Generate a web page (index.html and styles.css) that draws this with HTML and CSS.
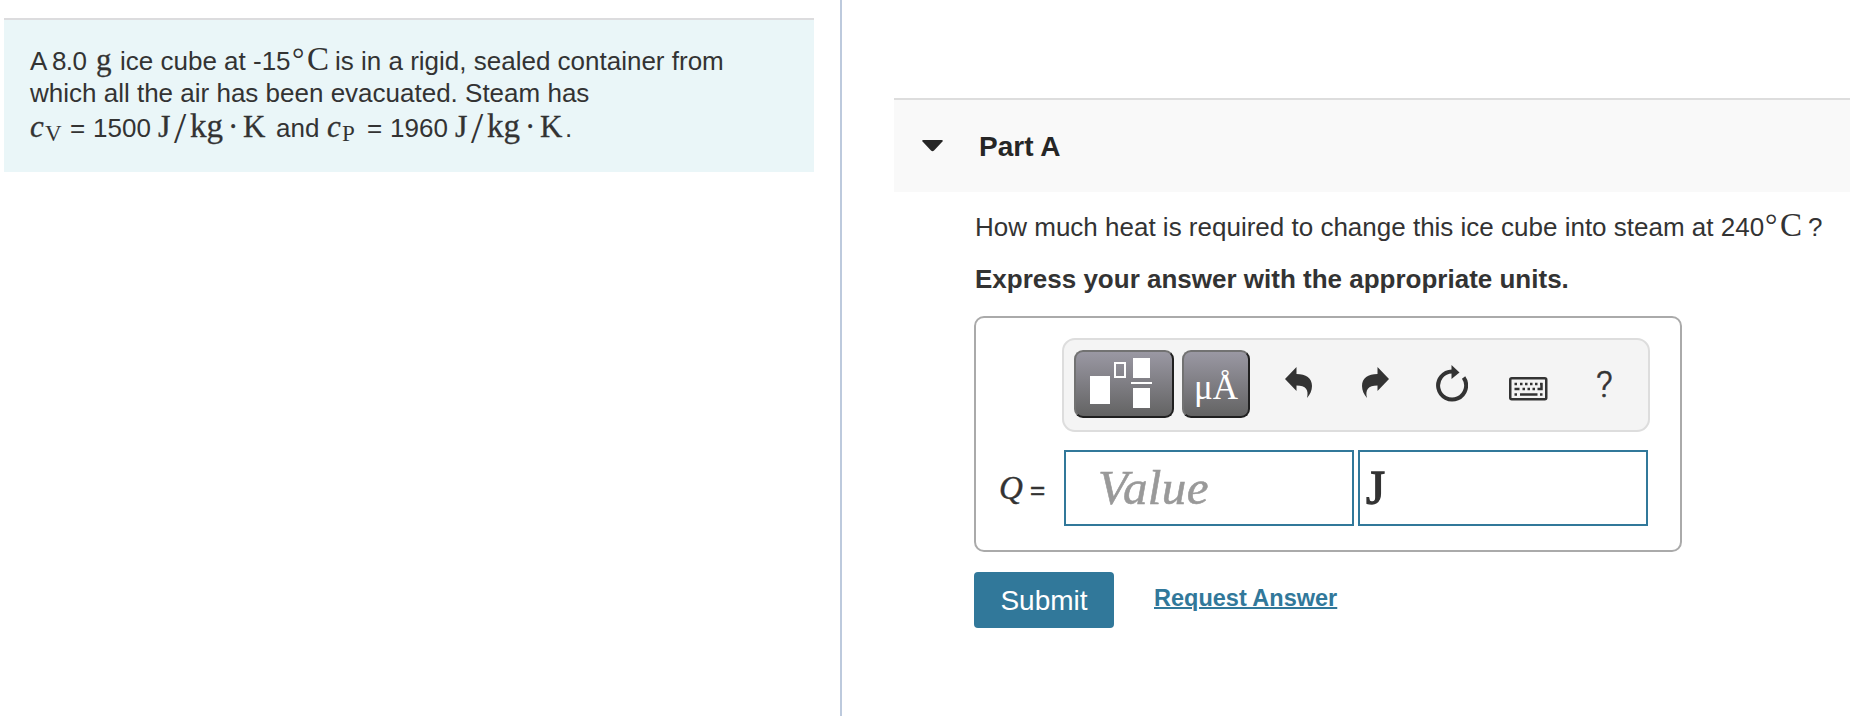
FILE: index.html
```
<!DOCTYPE html>
<html>
<head>
<meta charset="utf-8">
<title>Part A</title>
<link rel="stylesheet" href="styles.css">
</head>

<body>
<div class="page">
  <div class="left">
    <div class="intro">
      <p class="line one"><span class="w1">A 8.0</span><span class="m w2">g</span><span class="w3">ice cube at -15</span><span class="m w4">°</span><span class="m w5">C</span><span class="w6">is in a rigid, sealed container from</span></p>
      <p class="line two">which all the air has been evacuated. Steam has</p>
      <p class="line three"><span class="m c"><i>c</i></span><span class="m sub v">V</span><span class="eq">=</span><span class="num">1500</span><span class="m j">J</span><span class="m slash">/</span><span class="m kg">kg</span><span class="m dot">·</span><span class="m k">K</span><span class="and">and</span><span class="m c"><i>c</i></span><span class="m sub p">P</span><span class="eq">=</span><span class="num">1960</span><span class="m j">J</span><span class="m slash">/</span><span class="m kg">kg</span><span class="m dot">·</span><span class="m k2">K</span><span>.</span></p>
    </div>
  </div>
  <div class="right">
    <div class="part">
      <svg class="arrow" width="21" height="12" viewBox="0 0 21 12"><path d="M1.500 0h18q2 0 1 1.500L12 10.500q-1.500 1.500-3 0L.5 1.500Q-.5 0 1.500 0z" fill="#262626"/></svg>
      <h2>Part A</h2>
    </div>
    <div class="content">
      <p class="line ask"><span class="q1">How much heat is required to change this ice cube into steam at 240</span><span class="m w4">°</span><span class="m q2">C</span><span>?</span></p>
      <p class="express">Express your answer with the appropriate units.</p>
      <div class="answer">
        <div class="toolbar">
          <button class="tpl"><svg width="96" height="64" viewBox="0 0 96 64">
            <path d="M14 24h20v28H14zM57 6h17v20H57zM57 36h17v20H57zM55 30h21v2H55z" fill="#fff"/>
            <path d="M39 11h10v14H39z" fill="none" stroke="#fff" stroke-width="2"/>
          </svg></button>
          <button class="units"><span>μÅ</span></button>
          <svg class="undo" width="28" height="32" viewBox="0 0 28 32"><path d="M0 12L11.500 0v7C21 7 27 11 27 19c0 4.500-2 8.500-5 12 2-8-1-12.500-10.500-12.500V24z" fill="#333"/></svg>
          <svg class="redo" width="28" height="32" viewBox="0 0 28 32"><path d="M27 12L15.500 0v7C6 7 0 11 0 19c0 4.500 2 8.500 5 12-2-8 1-12.500 10.500-12.500V24z" fill="#333"/></svg>
          <svg class="reset" width="32" height="37" viewBox="0 0 32 37"><path d="M16 6.500a14 14 0 1 0 11.600 6" fill="none" stroke="#333" stroke-width="4"/><path d="M15.500 0l8 7.500-8 6.500z" fill="#333"/></svg>
          <svg class="keys" width="39" height="24" viewBox="0 0 39 24"><rect x="1.250" y="1.250" width="36" height="21" rx="1.500" fill="none" stroke="#333" stroke-width="2.500"/><path d="M5.500 7h2.500M11 7h2.500M16 7h2.500M21 7h2.500M26 7h2.500M31 7h2.500M5.500 12h5M13.500 12h2.500M18.500 12h2.500M23.500 12h2.500M28.500 12h4V6M5.500 17.500h2.500M11 17.500h17.500M31 17.500h2.500" fill="none" stroke="#333" stroke-width="2.500"/></svg>
          <span class="help">?</span>
        </div>
        <div class="row">
          <label><i>Q</i><b>=</b></label>
          <div class="field value"><i>Value</i></div>
          <div class="field unit">J</div>
        </div>
      </div>
      <div class="actions">
        <button class="submit"><span>Submit</span></button>
        <a class="request">Request Answer</a>
      </div>
    </div>
  </div>
</div>
</body>
</html>
```
FILE: styles.css
```
*{ padding:0; margin:0; box-sizing:border-box;}
body{ background:#fff; color:#333; font:26px/32px "Liberation Sans",Arial,sans-serif; overflow:hidden;}
button{ border:0; font-family:inherit;}
svg{ display:block; flex:none;}
.page{ display:flex; height:716px;}

.left{ width:842px; flex:none; padding:18px 26px 0 4px; border-right:2px solid #bdcadd;}
.intro{ height:154px; padding:23px 0 0 26px; background:#eaf6f8; border-top:2px solid #dcdcde;}
.line{ display:flex; align-items:baseline; white-space:nowrap; height:32px;}
.line span{ flex:none;}
.m{ font-family:"Liberation Serif",serif; font-size:31px; -webkit-text-stroke:.3px #333;}
.one{ height:34px;}
.w1{ width:66px; letter-spacing:-.6px;}
.w2{ width:24px;}
.w3{ width:172px;}
.w4{ width:15px; font-size:31px; line-height:28px; -webkit-text-stroke:0;}
.w5{ width:28px; font-size:33px; -webkit-text-stroke:0;}
.two{ height:33px;}
.c{ width:15px;}
.sub{ font-size:23px; position:relative; top:4px; -webkit-text-stroke:0;}
.v{ width:25px;}
.p{ width:25px;}
.eq{ width:23px;}
.num{ width:65px;}
.j{ width:16px; font-size:32px;}
.slash{ width:16px; font-size:44px; line-height:0; position:relative; top:6px; -webkit-text-stroke:0;}
.kg{ width:38px; font-size:33px;}
.dot{ width:15px;}
.k{ width:33px;}
.k2{ width:25px;}
.and{ width:51px;}

.right{ flex:1; padding:98px 0 0 52px;}
.part{ height:94px; display:flex; align-items:center; padding-left:28px; background:#f9f9f9; border-top:2px solid #ddd;}
.part h2{ margin:1px 0 0 36px; font-size:28px; color:#262626;}
.content{ padding:18px 0 0 80px;}
.ask,.express{ padding-left:1px;}
.q1{ width:790px;}
.q2{ width:28px; font-size:33px; line-height:30px; -webkit-text-stroke:0;}
.express{ margin-top:21px; font-weight:bold;}

.answer{ width:708px; height:236px; margin-top:21px; padding:20px 30px 0 20px; border:2px solid #aaa; border-radius:10px;}
.toolbar{ width:588px; height:94px; margin-left:66px; padding:10px; display:flex; background:#f4f4f4; border:2px solid #ddd; border-radius:13px;}
.tpl,.units{ height:68px; flex:none; border:2px solid; border-color:#727272 #202020 #202020 #727272; border-radius:9px; background:linear-gradient(#9a98a3,#636363);}
.tpl{ width:100px;}
.units{ width:68px; margin-left:8px; padding-top:8px; color:#fff; font:35px/56px "Liberation Serif",serif;}
.undo{ margin:17px 0 0 35px;}
.redo{ margin:17px 0 0 49px;}
.reset{ margin:15px 0 0 46px;}
.keys{ margin:27px 0 0 41px;}
.help{ margin:17px 0 0 48px; font:300 37px/35px Roboto,sans-serif; -webkit-text-stroke:.6px #333;}
.row{ display:flex; margin-top:18px;}
.row label{ width:68px; display:flex; align-items:baseline; padding:22px 0 0 3px;}
.row label i{ width:31px; font:italic 33px/32px "Liberation Serif",serif; -webkit-text-stroke:.4px #333;}
.row label b{ font-size:26px; font-weight:normal; -webkit-text-stroke:.5px #333;}
.field{ width:290px; height:76px; border:2px solid #31789a; font:49px/72px "Liberation Serif",serif;}
.value{ padding-left:32px; color:#999; letter-spacing:.4px; -webkit-text-stroke:.6px #999;}
.unit{ margin-left:4px; padding-left:6px; -webkit-text-stroke:1.3px #333;}

.actions{ display:flex; margin-top:20px;}
.submit{ width:140px; height:56px; padding-top:1px; background:#31789a; border-radius:4px; color:#fff; font-size:28px;}
.request{ margin:10px 0 0 40px; color:#31789a; font-size:23.5px; font-weight:bold; text-decoration:underline; text-decoration-thickness:2px;}
```
